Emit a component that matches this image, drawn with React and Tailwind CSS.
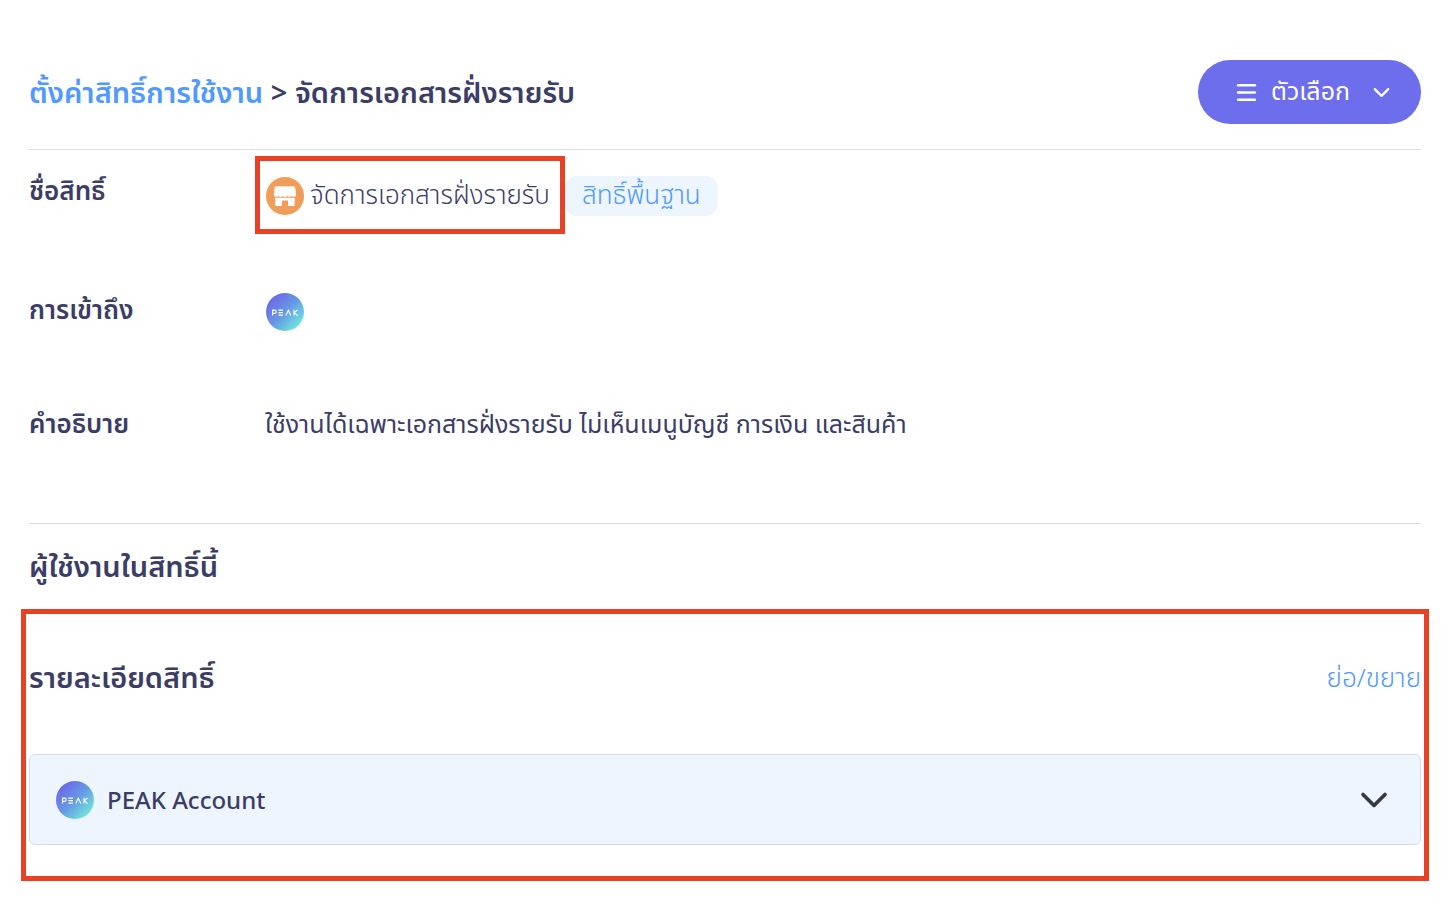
import React, { useState } from 'react';
import { Menu, ChevronDown } from 'lucide-react';

const PeakLogo = () => (
  <svg className="size-[38px] shrink-0" viewBox="0 0 38 38" role="img" aria-label="PEAK">
    <defs>
      <linearGradient id="peak" x1="0.1" y1="0.1" x2="0.9" y2="0.9">
        <stop offset="0" stopColor="#6b63e8" />
        <stop offset="0.5" stopColor="#6699e4" />
        <stop offset="1" stopColor="#72ecdc" />
      </linearGradient>
    </defs>
    <circle cx="19" cy="19" r="19" fill="url(#peak)" />
    <g fill="none" stroke="#fff" strokeWidth="1.1">
      <path d="M6.6 22.6v-5.5h2a1.6 1.6 0 0 1 0 3.3h-2" />
      <path d="M12.4 17.1h4.6M12.4 19.6h4.6M12.4 22.1h4.6" />
      <path d="M19.8 22.6l2.5-5.4 2.5 5.4" />
      <path d="M28 16.8v5.8M31.6 16.8l-3.3 2.9 3.3 2.9" />
    </g>
  </svg>
);

const StoreIcon = () => (
  <svg className="size-[38px] shrink-0" viewBox="0 0 38 38" aria-hidden="true">
    <circle cx="19" cy="19" r="19" fill="#f19c59" />
    <path
      fill="#fff"
      d="M10.4 9.2h17a1.8 1.8 0 0 1 1.8 1.5l.8 6v1.4a2.2 1.5 0 0 1-4.4.4 2.2 1.5 0 0 1-4.4 0 2.2 1.5 0 0 1-4.4 0 2.2 1.5 0 0 1-4.4 0 2.2 1.5 0 0 1-4.4-.4v-1.4l.6-6A1.8 1.8 0 0 1 10.4 9.2Z"
    />
    <path fill="#fff" d="M9.2 20.8h19.5v7.4a.8.8 0 0 1-.8.8H22V23.4h-6V29h-6a.8.8 0 0 1-.8-.8Z" />
  </svg>
);

const App = () => {
  const [open, setOpen] = useState(false);

  return (
    <main className="px-[21px] pt-[60px] font-['Noto_Sans_Thai','Noto_Sans',sans-serif] text-[26px] leading-9 text-[#3c3d66]">
      <div className="px-2">
        <header className="flex items-center justify-between border-b border-[#dcdde3] pb-[25px]">
          <h1 className="font-['Noto_Sans','Noto_Sans_Thai',sans-serif] text-[29px] leading-10 font-semibold">
            <a href="#permissions" className="text-[#5099ff]">ตั้งค่าสิทธิ์การใช้งาน</a>
            {' > '}จัดการเอกสารฝั่งรายรับ
          </h1>
          <button type="button" className="flex h-16 items-center rounded-full bg-[#6c6eeb] pr-[26px] pl-9 text-white">
            <Menu size={25} strokeWidth={2.5} />
            <span className="ml-3 text-[25px]">ตัวเลือก</span>
            <ChevronDown className="ml-[18px]" size={27} strokeWidth={2} />
          </button>
        </header>

        <dl className="border-b border-[#dcdde3] pt-[6px] pb-20">
          <div className="flex h-[78px]">
            <dt className="w-[226px] pt-[18px] font-semibold">ชื่อสิทธิ์</dt>
            <dd className="flex items-center font-light">
              <div className="flex h-full items-center gap-[6px] border-5 border-[#e94125] px-[6px] pt-[2px]">
                <StoreIcon />
                <span className="w-[244px] whitespace-nowrap">จัดการเอกสารฝั่งรายรับ</span>
              </div>
              <span className="mt-[2px] flex h-10 items-center rounded-xl bg-[#edf5ff] px-[17px] text-[#5099ff]">สิทธิ์พื้นฐาน</span>
            </dd>
          </div>
          <div className="flex pt-[59px]">
            <dt className="w-[237px] font-semibold">การเข้าถึง</dt>
            <dd>
              <PeakLogo />
            </dd>
          </div>
          <div className="flex pt-[76px]">
            <dt className="w-[236px] font-semibold">คำอธิบาย</dt>
            <dd className="text-[25px]">ใช้งานได้เฉพาะเอกสารฝั่งรายรับ ไม่เห็นเมนูบัญชี การเงิน และสินค้า</dd>
          </div>
        </dl>

        <h2 className="pt-6 pb-[21px] text-[29px] leading-10 font-semibold">ผู้ใช้งานในสิทธิ์นี้</h2>
      </div>

      <section className="border-5 border-[#e94125] px-[3px] pt-[45px] pb-[31px]">
        <div className="flex items-center justify-between">
          <h2 className="text-[29px] leading-10 font-semibold">รายละเอียดสิทธิ์</h2>
          <button type="button" className="font-light text-[#5099ff]" onClick={() => setOpen(!open)}>ย่อ/ขยาย</button>
        </div>
        <button
          type="button"
          aria-expanded={open}
          onClick={() => setOpen(!open)}
          className="mt-[55px] flex h-[91px] w-full items-center rounded-md border border-[#d8d9e6] bg-[#edf5ff] pr-6 pl-[26px]"
        >
          <PeakLogo />
          <span className="ml-[13px] font-['Noto_Sans',sans-serif] text-2xl font-medium">PEAK Account</span>
          <ChevronDown className="ml-auto text-[#343a40]" size={44} strokeWidth={2} />
        </button>
      </section>
    </main>
  );
};

export default App;
